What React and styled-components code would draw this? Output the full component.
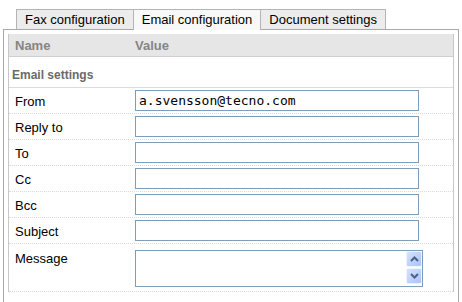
import React from "react";
import styled, { createGlobalStyle } from "styled-components";

const GlobalStyle = createGlobalStyle`
  html, body {
    margin: 0;
    padding: 0;
    background: #ffffff;
  }
  body {
    font-family: "Liberation Sans", Arial, sans-serif;
    font-size: 13px;
    color: #000;
  }
`;

const Page = styled.div`
  width: 456px;
  padding: 9px 0 0 3px;
`;

const TabBar = styled.div`
  display: flex;
  padding-left: 14px;
  height: 20px;
`;

const Tab = styled.div`
  position: relative;
  box-sizing: border-box;
  height: ${(p) => (p.active ? "21px" : "20px")};
  margin-left: -1px;
  padding: 0 8px;
  line-height: 19px;
  font-size: 13px;
  border: 1px solid #b4b4b4;
  border-bottom: none;
  background: ${(p) => (p.active ? "#f8f8f8" : "#ececec")};
  z-index: ${(p) => (p.active ? 2 : 1)};
  white-space: nowrap;
`;

const Panel = styled.div`
  border: 1px solid #a8a8a8;
  padding: 4px 4px 0 4px;
  height: 280px;
  box-sizing: border-box;
  background: #fff;
`;

const Table = styled.div`
  border-left: 1px solid #c8c8c8;
  border-right: 1px solid #c8c8c8;
`;

const HeadRow = styled.div`
  display: grid;
  grid-template-columns: 120px 1fr;
  height: 22px;
  align-items: center;
  background: #e6e6e6;
  border-bottom: 1px solid #cfcfcf;
  font-weight: bold;
  color: #858585;
  font-size: 13px;
  padding-left: 6px;
`;

const Section = styled.div`
  height: 30px;
  line-height: 36px;
  padding-left: 3px;
  font-size: 12px;
  font-weight: bold;
  color: #6a6a6a;
  border-bottom: 1px solid #dcdcdc;
`;

const Row = styled.div`
  display: grid;
  grid-template-columns: 120px 1fr;
  align-items: ${(p) => (p.top ? "start" : "center")};
  padding: ${(p) => (p.top ? "6px 0 4px 6px" : "2px 0 2px 6px")};
  border-bottom: 1px dotted #dadada;
  font-size: 13px;
`;

const Label = styled.div`
  line-height: 15px;
  padding-top: 1px;
`;

const Field = styled.input`
  box-sizing: border-box;
  width: 284px;
  height: 21px;
  margin: 0;
  padding: 0 3px;
  border: 1px solid #7f9db9;
  font-family: "DejaVu Sans Mono", "Liberation Mono", monospace;
  font-size: 13px;
  color: #000;
  outline: none;
`;

const AreaWrap = styled.div`
  position: relative;
  width: 288px;
  height: 37px;
`;

const Area = styled.textarea`
  box-sizing: border-box;
  width: 288px;
  height: 37px;
  margin: 0;
  padding: 2px 20px 2px 3px;
  border: 1px solid #7f9db9;
  resize: none;
  overflow: hidden;
  outline: none;
  display: block;
`;

const ScrollBtns = styled.div`
  position: absolute;
  right: 1px;
  top: 1px;
  display: flex;
  flex-direction: column;
  gap: 1px;
`;

const ScrollBtn = styled.div`
  width: 16px;
  height: 16px;
  box-sizing: border-box;
  border: 1px solid #eef3fe;
  border-radius: 2px;
  background: linear-gradient(135deg, #d6e2fd 0%, #bccffa 60%, #aec4f6 100%);
  display: flex;
  align-items: center;
  justify-content: center;
`;

const Chevron = ({ up }) => (
  <svg width="9" height="6" viewBox="0 0 9 6">
    <path
      d={up ? "M1 5 L4.5 1.5 L8 5" : "M1 1 L4.5 4.5 L8 1"}
      fill="none"
      stroke="#4d6185"
      strokeWidth="2"
    />
  </svg>
);

const fields = [
  ["From", "a.svensson@tecno.com"],
  ["Reply to", ""],
  ["To", ""],
  ["Cc", ""],
  ["Bcc", ""],
  ["Subject", ""],
];

export default function App() {
  return (
    <Page>
      <GlobalStyle />
      <TabBar>
        <Tab>Fax configuration</Tab>
        <Tab active>Email configuration</Tab>
        <Tab>Document settings</Tab>
      </TabBar>
      <Panel>
        <Table>
          <HeadRow>
            <div>Name</div>
            <div>Value</div>
          </HeadRow>
          <Section>Email settings</Section>
          {fields.map(([name, value]) => (
            <Row key={name}>
              <Label>{name}</Label>
              <Field defaultValue={value} />
            </Row>
          ))}
          <Row top>
            <Label>Message</Label>
            <AreaWrap>
              <Area />
              <ScrollBtns>
                <ScrollBtn>
                  <Chevron up />
                </ScrollBtn>
                <ScrollBtn>
                  <Chevron />
                </ScrollBtn>
              </ScrollBtns>
            </AreaWrap>
          </Row>
        </Table>
      </Panel>
    </Page>
  );
}
